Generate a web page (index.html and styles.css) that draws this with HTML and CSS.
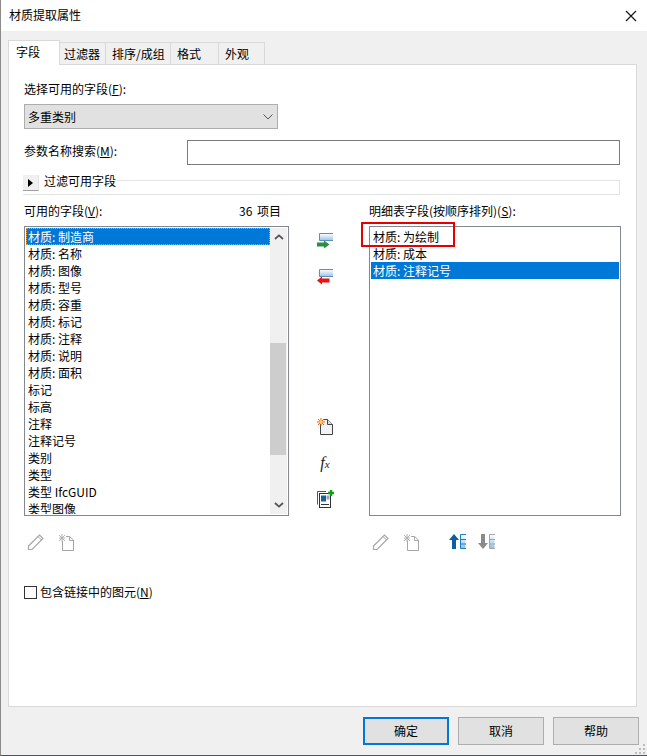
FILE: index.html
```html
<!DOCTYPE html>
<html lang="zh">
<head>
<meta charset="utf-8">
<title>材质提取属性</title>
<link rel="stylesheet" href="styles.css">
</head>
<body>
<div class="window">
  <header class="titlebar">
    <span>材质提取属性</span>
    <svg class="close" width="12" height="12" viewBox="0 0 12 12"><path d="M1 1L11 11M11 1L1 11" stroke="#111" stroke-width="1.1" fill="none"/></svg>
  </header>
  <nav class="tabs">
    <div class="tab active">字段</div>
    <div class="tab t2">过滤器</div>
    <div class="tab t3">排序/成组</div>
    <div class="tab t4">格式</div>
    <div class="tab t5">外观</div>
  </nav>
  <main class="panel">
    <div class="label">选择可用的字段(<u>F</u>):</div>
    <div class="select">
      <span>多重类别</span>
      <svg width="10" height="6" viewBox="0 0 10 6"><path d="M.5 .5L5 5L9.5 .5" stroke="#555" fill="none"/></svg>
    </div>
    <div class="search-row">
      <div class="label">参数名称搜索(<u>M</u>):</div>
      <div class="input"></div>
    </div>
    <div class="filter">
      <div class="expander"><svg width="5" height="8" viewBox="0 0 5 8"><path d="M0 0L5 4L0 8Z" fill="#000"/></svg></div>
      <div class="filter-label">过滤可用字段</div>
      <div class="rule"></div>
    </div>
    <div class="columns">
      <div class="label count-row"><span>可用的字段(<u>V</u>):</span><span class="count">36 项目</span></div>
      <div></div>
      <div class="label">明细表字段(按顺序排列)(<u>S</u>):</div>

      <div class="list">
        <div class="rows">
          <div class="row selected focus">材质: 制造商</div>
          <div class="row">材质: 名称</div>
          <div class="row">材质: 图像</div>
          <div class="row">材质: 型号</div>
          <div class="row">材质: 容重</div>
          <div class="row">材质: 标记</div>
          <div class="row">材质: 注释</div>
          <div class="row">材质: 说明</div>
          <div class="row">材质: 面积</div>
          <div class="row">标记</div>
          <div class="row">标高</div>
          <div class="row">注释</div>
          <div class="row">注释记号</div>
          <div class="row">类别</div>
          <div class="row">类型</div>
          <div class="row">类型 IfcGUID</div>
          <div class="row">类型图像</div>
        </div>
        <div class="scrollbar">
          <svg class="arrow" width="10" height="6" viewBox="0 0 10 6"><path d="M1 5L5 1.4L9 5" stroke="#555" stroke-width="1.8" fill="none"/></svg>
          <div class="thumb"></div>
          <svg class="arrow" width="10" height="6" viewBox="0 0 10 6"><path d="M1 1L5 4.6L9 1" stroke="#555" stroke-width="1.8" fill="none"/></svg>
        </div>
      </div>

      <div class="mid">
        <div class="mid-top">
          <svg width="16" height="17" viewBox="0 0 16 17"><defs><linearGradient id="g1" x1="0" y1="0" x2="0" y2="1"><stop offset="0" stop-color="#fff"/><stop offset="1" stop-color="#9cc3e6"/></linearGradient></defs><path d="M16 .5H2.500V7.500H16" fill="url(#g1)" stroke="#5b8fc0"/><path d="M0 9.500H7V7.500L12.500 11.500L7 15.500V13.500H0Z" fill="#2e8b45"/></svg>
          <svg width="16" height="17" viewBox="0 0 16 17"><path d="M16 .5H2.500V7.500H16" fill="url(#g1)" stroke="#5b8fc0"/><path d="M12.500 9.500H5V7.500L0 11.500L5 15.500V13.500H12.500Z" fill="#f01010"/></svg>
        </div>
        <div class="mid-bottom">
          <svg width="17" height="17" viewBox="0 0 17 17"><path d="M3.500 6V16.500H15.500V6.500L10.500 1.500H6" fill="#f3f3f6" stroke="#444"/><path d="M10.500 1.500V6.500H15.500" fill="#ddd" stroke="#444"/><path d="M4 0V8M0 4H8M1 1L7 7M7 1L1 7" stroke="#e85a10" stroke-width="1"/><circle cx="4" cy="4" r="1.800" fill="#ffd040"/></svg>
          <span class="fx"><i>f</i><i class="x">x</i></span>
          <svg width="17" height="18" viewBox="0 0 17 18"><path d="M.5 14.500V1.500H9" fill="none" stroke="#555"/><rect x="2.500" y="3.500" width="11" height="14" fill="#fff" stroke="#333"/><rect x="4" y="5.500" width="5" height="6" fill="#1f5f99"/><rect x="9.500" y="5.500" width="3" height="4" fill="#8fa8c0"/><path d="M4 14.500H12" stroke="#333"/><path d="M11 3H17M14 0V6" stroke="#12a012" stroke-width="2.400"/></svg>
        </div>
      </div>

      <div class="list right-list">
        <div class="rows">
          <div class="row">材质: 为绘制</div>
          <div class="row">材质: 成本</div>
          <div class="row selected">材质: 注释记号</div>
        </div>
        <div class="highlight"></div>
      </div>

      <div class="tools tools-left">
        <svg width="18" height="18" viewBox="0 0 18 18"><path d="M1.500 13L12.500 2L16 5.500L5 16.500H1.500Z" fill="none" stroke="#a6a6a6" stroke-width="1.200"/><path d="M11 3.500L14.500 7" stroke="#a6a6a6"/></svg>
        <svg class="newdoc" width="15" height="17" viewBox="0 0 15 17"><path d="M3.500 6.500V16.500H14.500V6L10.500 2.500H7" fill="none" stroke="#a6a6a6"/><path d="M10.500 2.500V6.500H14.500" fill="none" stroke="#a6a6a6"/><path d="M0 1L6 7M6 1L0 7M3 0V8M0 4H6" stroke="#b0b0b0"/></svg>
      </div>
      <div></div>
      <div class="tools tools-right">
        <svg width="18" height="18" viewBox="0 0 18 18"><path d="M1.500 13L12.500 2L16 5.500L5 16.500H1.500Z" fill="none" stroke="#a6a6a6" stroke-width="1.200"/><path d="M11 3.500L14.500 7" stroke="#a6a6a6"/></svg>
        <svg class="newdoc" width="15" height="17" viewBox="0 0 15 17"><path d="M3.500 6.500V16.500H14.500V6L10.500 2.500H7" fill="none" stroke="#a6a6a6"/><path d="M10.500 2.500V6.500H14.500" fill="none" stroke="#a6a6a6"/><path d="M0 1L6 7M6 1L0 7M3 0V8M0 4H6" stroke="#b0b0b0"/></svg>
        <svg class="move-up" width="17" height="16" viewBox="0 0 17 16"><defs><linearGradient id="g2" x1="0" y1="0" x2="0" y2="1"><stop offset="0" stop-color="#fff"/><stop offset="1" stop-color="#8fbde6"/></linearGradient></defs><path d="M5 0L10 6H7V15H3V6H0Z" fill="#0b5f9e"/><path d="M16.500 .5H11.500V14.500H16.500V.5" fill="url(#g2)"/><path d="M17 .5H11.500V14.500H17M11 5.500H17M11 10H17" fill="none" stroke="#1b7fc4"/></svg>
        <svg class="move-down" width="17" height="16" viewBox="0 0 17 16"><path d="M3 0H7V9H10L5 15L0 9H3Z" fill="#8a8a8a"/><path d="M16.500 .5H11.500V14.500H16.500V.5" fill="url(#g2)"/><path d="M17 .5H11.500V14.500H17M11 5.500H17M11 10H17" fill="none" stroke="#a6a6a6"/></svg>
      </div>
    </div>
    <div class="check-row">
      <span class="checkbox"></span>
      <span class="label">包含链接中的图元(<u>N</u>)</span>
    </div>
  </main>
  <footer class="footer">
    <div class="btn default">确定</div>
    <div class="btn">取消</div>
    <div class="btn">帮助</div>
    <svg class="grip" width="11" height="11" viewBox="0 0 11 11"><path d="M8 1h2v2H8zM4 5h2v2H4zM8 5h2v2H8zM0 9h2v2H0zM4 9h2v2H4zM8 9h2v2H8z" fill="#bdbdbd"/></svg>
  </footer>
</div>
</body>
</html>
```

FILE: styles.css
```css
* { box-sizing: border-box; }
html, body { margin: 0; padding: 0; }
body {
  width: 647px;
  height: 756px;
  overflow: hidden;
  font-family: "Noto Sans CJK SC", "Noto Sans", sans-serif;
  font-size: 12px;
  color: #000;
}
.window {
  position: relative;
  width: 647px;
  height: 756px;
  display: flex;
  flex-direction: column;
  background: #f0f0f0;
  border-left: 1px solid #8a8a8a;
  border-bottom: 1px solid #3a5a66;
}
.titlebar {
  height: 31px;
  flex: none;
  background: #fff;
  display: flex;
  align-items: center;
  justify-content: space-between;
  padding: 0 10px 2px 8px;
  line-height: 29px;
}
.close { margin-top: 2px; }
.tabs {
  flex: none;
  height: 34px;
  display: flex;
  align-items: flex-end;
  padding: 9px 0 0 7px;
  position: relative;
  z-index: 1;
}
.tab {
  height: 23px;
  width: 46px;
  padding-left: 4px;
  line-height: 22px;
  background: #f0f0f0;
  border: 1px solid #d9d9d9;
  border-left: 0;
}
.tab.active {
  width: 52px;
  height: 25px;
  padding-left: 7px;
  line-height: 21px;
  background: #fff;
  border-left: 1px solid #d9d9d9;
  border-bottom: 0;
}
.t3 { width: 65px; padding-left: 6px; }
.t4 { width: 48px; padding-left: 6px; }
.t5 { padding-left: 6px; }
.panel {
  flex: none;
  width: 629px;
  height: 643px;
  margin: -1px 0 0 7px;
  padding: 16px 0 0 15px;
  background: #fff;
  border: 1px solid #d9d9d9;
}
.label {
  height: 17px;
  line-height: 15px;
  white-space: nowrap;
}
.select {
  width: 254px;
  height: 25px;
  margin-top: 6px;
  padding: 0 4px 0 3px;
  display: flex;
  align-items: center;
  justify-content: space-between;
  background: #e1e1e1;
  border: 1px solid #adadad;
}
.search-row {
  display: flex;
  align-items: flex-start;
  margin-top: 11px;
  height: 25px;
}
.search-row .label { width: 163px; margin-top: 3px; }
.input {
  width: 433px;
  height: 25px;
  border: 1px solid #7a7a7a;
  background: #fff;
}
.filter {
  display: flex;
  align-items: flex-start;
  width: 597px;
  height: 20px;
  margin: 10px 0 0 -1px;
  border-bottom: 1px solid #e3e3e3;
}
.expander {
  width: 16px;
  height: 16px;
  flex: none;
  display: flex;
  align-items: center;
  justify-content: center;
  background: #f0f0f0;
  border-bottom: 1px solid #a0a0a0;
  border-right: 1px solid #e3e3e3;
}
.filter-label {
  margin-left: 5px;
  height: 13px;
  line-height: 11px;
  flex: none;
}
.rule {
  flex: 1;
  height: 15px;
  margin: 5px 0 0 1px;
  border-top: 1px solid #e3e3e3;
  border-right: 1px solid #e3e3e3;
}
.columns {
  display: grid;
  grid-template-columns: 265px 80px 252px;
  grid-template-rows: 17px 290px 18px;
  margin-top: 8px;
  row-gap: 6px;
}
.columns .tools { margin-top: 11px; }
.count-row {
  display: flex;
  justify-content: space-between;
  padding-right: 8px;
}
.count { word-spacing: 2px; }
.list {
  position: relative;
  display: flex;
  padding: 1px;
  border: 1px solid #828790;
  background: #fff;
}
.rows { flex: 1; overflow: hidden; }
.row {
  height: 17px;
  line-height: 17px;
  padding-left: 2px;
  white-space: nowrap;
}
.row.selected {
  background: #0078d7;
  color: #fff;
}
.row.focus { outline: 1px dotted #f0a040; outline-offset: -1px; }
.scrollbar {
  width: 17px;
  flex: none;
  background: #f0f0f0;
  display: flex;
  flex-direction: column;
  align-items: center;
  justify-content: space-between;
  position: relative;
  padding: 6px 0;
}
.thumb {
  position: absolute;
  top: 115px;
  left: 0;
  width: 16px;
  height: 112px;
  background: #cdcdcd;
}
.mid {
  display: flex;
  flex-direction: column;
  align-items: center;
  padding-right: 8px;
}
.mid-top {
  display: flex;
  flex-direction: column;
  gap: 19px;
  margin-top: 7px;
}
.mid-bottom {
  display: flex;
  flex-direction: column;
  align-items: center;
  gap: 19px;
  margin-top: 132px;
}
.fx {
  font-family: "Liberation Serif", serif;
  font-size: 16px;
  line-height: 17px;
  height: 17px;
  color: #222;
}
.fx .x { font-size: 11px; }
.highlight {
  position: absolute;
  left: -9px;
  top: -5px;
  width: 94px;
  height: 25px;
  border: 2px solid #e60000;
}
.tools {
  display: flex;
  align-items: center;
  height: 18px;
  padding-left: 3px;
}
.newdoc { margin-left: 14px; }
.move-up { margin-left: 30px; }
.move-down { margin-left: 12px; }
.check-row {
  display: flex;
  align-items: center;
  gap: 3px;
  margin-top: 45px;
  height: 14px;
}
.checkbox {
  width: 13px;
  height: 13px;
  border: 1px solid #333;
  background: #fff;
}
.footer {
  position: relative;
  flex: 1;
  display: flex;
  gap: 9px;
  padding: 10px 7px 0 362px;
}
.btn {
  width: 86px;
  height: 28px;
  line-height: 26px;
  text-align: center;
  background: #e1e1e1;
  border: 1px solid #adadad;
}
.btn.default {
  border: 2px solid #0078d7;
  line-height: 24px;
}
.grip {
  position: absolute;
  right: 1px;
  bottom: 1px;
}
```
